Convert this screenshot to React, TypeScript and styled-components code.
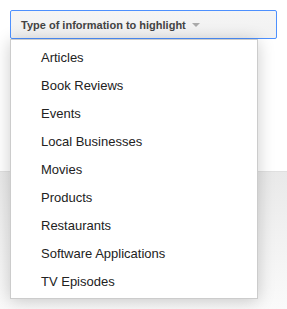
import styled, { createGlobalStyle } from 'styled-components';

const GlobalStyle = createGlobalStyle`
  html, body {
    margin: 0;
    padding: 0;
    background: #fff;
    font-family: Arial, "Liberation Sans", sans-serif;
  }
`;

const items = [
  'Articles',
  'Book Reviews',
  'Events',
  'Local Businesses',
  'Movies',
  'Products',
  'Restaurants',
  'Software Applications',
  'TV Episodes',
];

const App: React.FC = () => {
  return (
    <>
      <GlobalStyle />
      <Page>
        <TopArea>
          <Picker>
            <PickerButton>
              Type of information to highlight
              <Caret />
            </PickerButton>
            <Menu>
              {items.map((item) => (
                <MenuItem key={item}>{item}</MenuItem>
              ))}
            </Menu>
          </Picker>
        </TopArea>
        <BottomArea />
      </Page>
    </>
  );
};

const Page = styled.div`
  width: 287px;
  height: 309px;
  display: flex;
  flex-direction: column;
  overflow: hidden;
`;

const TopArea = styled.div`
  height: 171px;
  padding: 10px 10px 0 10px;
  box-sizing: border-box;
  background: #fff;
`;

const BottomArea = styled.div`
  flex: 1;
  border-top: 1px solid #e0e0e0;
  background: linear-gradient(to bottom, #e9e9e9 0%, #f2f2f2 50%, #fafafa 100%);
`;

const Picker = styled.div`
  position: relative;
  width: 267px;
`;

const PickerButton = styled.div`
  height: 27px;
  box-sizing: content-box;
  border: 1px solid #4d90fe;
  border-radius: 2px;
  background: linear-gradient(to bottom, #f5f5f5, #f1f1f1);
  display: flex;
  align-items: center;
  padding-left: 10px;
  font-size: 11px;
  font-weight: bold;
  color: #444;
`;

const Caret = styled.span`
  width: 0;
  height: 0;
  margin-left: 6px;
  margin-top: 1px;
  border-left: 4px solid transparent;
  border-right: 4px solid transparent;
  border-top: 4px solid #aaa;
`;

const Menu = styled.div`
  position: absolute;
  top: 29px;
  left: 0;
  width: 246px;
  padding: 4px 0 2px;
  background: #fff;
  border: 1px solid #ccc;
  box-shadow: 0 2px 16px rgba(0, 0, 0, 0.2);
  z-index: 2;
`;

const MenuItem = styled.div`
  height: 28px;
  line-height: 28px;
  padding-left: 30px;
  font-size: 13px;
  color: #222;
  white-space: nowrap;
`;

export default App;
